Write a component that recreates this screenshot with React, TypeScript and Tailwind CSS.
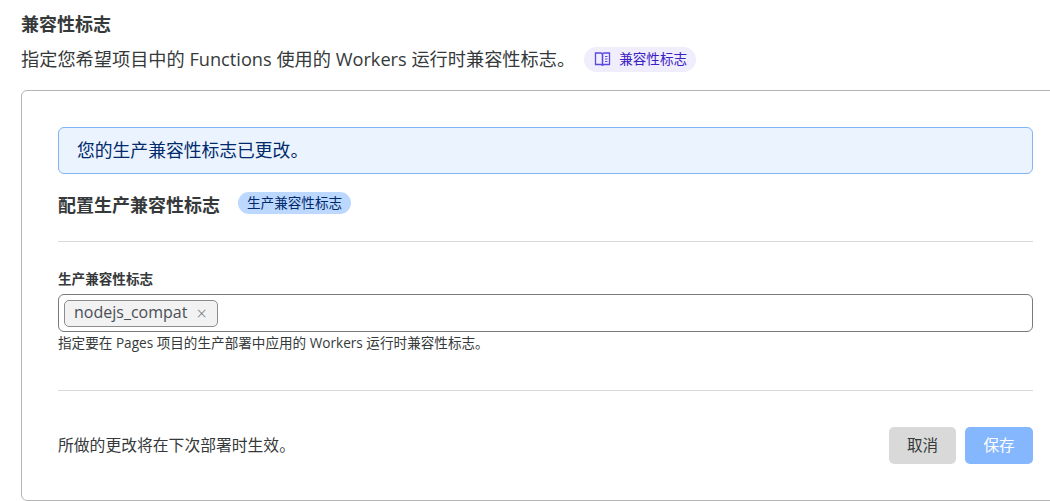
import React from 'react'

const App: React.FC = () => {
  return (
    <div className="h-[501px] w-[1050px] overflow-hidden bg-white pl-[21px] pt-[13px] font-['Open_Sans','Noto_Sans_CJK_SC',sans-serif] text-[#36393a]">
      {/* Header */}
      <h2 className="h-[22px] text-[18px] font-bold leading-[22px]">兼容性标志</h2>
      <div className="mt-[12px] flex h-[25px] items-center">
        <p className="text-[18.2px] leading-[25px]">指定您希望项目中的 Functions 使用的 Workers 运行时兼容性标志。</p>
        <span className="ml-[9px] flex h-[25px] w-[112px] items-center rounded-full bg-[#f0edfc] pl-[10px] text-[13.6px] text-[#3a22c4]">
          <svg width="17" height="17" viewBox="0 0 17 17" fill="none" stroke="#5a48e0" strokeWidth="1.3">
            <path d="M1.5 2h5.3c.9 0 1.7.7 1.7 1.6v11.2c0-.7-.6-1.3-1.4-1.3H1.5V2Z" />
            <path d="M15.5 2h-5.3c-.9 0-1.7.7-1.7 1.6v11.2c0-.7.6-1.3 1.4-1.3h5.6V2Z" />
            <path d="M11 5.5h2.5M11 8h2.5M11 10.5h2.5" strokeWidth="1" />
          </svg>
          <span className="ml-[8px]">兼容性标志</span>
        </span>
      </div>

      {/* Card */}
      <div className="mt-[18px] h-[411px] w-[1048px] rounded-[6px] border border-[#b5b5b5] pl-[36px] pt-[36px]">
        <div className="w-[975px]">
          <div className="flex h-[47px] items-center rounded-[6px] border border-[#80b5f5] bg-[#ebf3ff] pl-[18px] text-[17.8px] text-[#002a6b]">
            您的生产兼容性标志已更改。
          </div>

          <div className="mt-[18px] flex h-[24px] items-center">
            <h3 className="pt-[2px] text-[18px] font-bold">配置生产兼容性标志</h3>
            <span className="ml-[18px] flex h-[22px] -translate-y-px items-center rounded-full bg-[#bdd8ff] px-[9px] text-[13.6px] text-[#002a6b]">
              生产兼容性标志
            </span>
          </div>

          <div className="mt-[25px] h-px bg-[#d9d9d9]" />

          {/* Field */}
          <label className="mt-[29px] block h-[16px] text-[13.6px] font-semibold leading-[16px]">生产兼容性标志</label>
          <div className="mt-[7px] flex h-[38px] items-center rounded-[6px] border border-[#7a7a7a] pl-[5px]">
            <span className="flex h-[27px] w-[154px] items-center rounded-[5px] border border-[#8c8c8c] bg-[#f2f2f2] pb-[2px] pl-[9px] text-[16px] text-[#4a4f57]">
              nodejs_compat
              <span className="ml-[9px] mt-[2px] text-[18px] font-light leading-none text-[#6b7280]">×</span>
            </span>
          </div>
          <p className="mt-[2px] h-[18px] text-[13.6px] leading-[18px]">指定要在 Pages 项目的生产部署中应用的 Workers 运行时兼容性标志。</p>

          <div className="mt-[38px] h-px bg-[#d9d9d9]" />

          {/* Footer */}
          <div className="mt-[36px] flex items-center justify-between">
            <p className="text-[15.8px]">所做的更改将在下次部署时生效。</p>
            <div className="flex gap-[9px]">
              <button className="h-[37px] w-[67px] rounded-[5px] bg-[#d9d9d9] text-[15.6px] text-[#36393a]">取消</button>
              <button className="h-[37px] w-[68px] rounded-[5px] bg-[#85b7ff] text-[15.6px] text-white">保存</button>
            </div>
          </div>
        </div>
      </div>
    </div>
  )
}

export default App
